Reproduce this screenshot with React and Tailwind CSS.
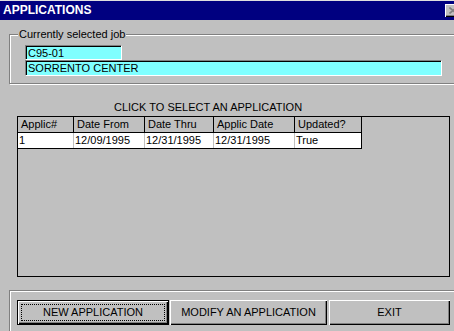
import React from 'react';

const columns = [
  { key: 'num', label: 'Applic#', width: 'w-[56px]' },
  { key: 'from', label: 'Date From', width: 'w-[71px]' },
  { key: 'thru', label: 'Date Thru', width: 'w-[69px]' },
  { key: 'applic', label: 'Applic Date', width: 'w-[81px]' },
  { key: 'updated', label: 'Updated?', width: 'w-[67px]' },
];

const rows = [
  { num: '1', from: '12/09/1995', thru: '12/31/1995', applic: '12/31/1995', updated: 'True' },
];

function Field({ value, className }) {
  return (
    <div className={`border-t border-l border-t-[#808080] border-l-[#808080] border-b border-r border-b-white border-r-white ${className}`}>
      <div className="h-full border-t border-l border-black bg-[#7fffff] pl-[1px] leading-[13px]">
        {value}
      </div>
    </div>
  );
}

function Button({ label, isDefault, className }) {
  if (isDefault) {
    return (
      <div className={`h-[25px] border border-black ${className}`}>
        <div className="h-full p-[3px] shadow-[inset_1px_1px_0_#fff,inset_-1px_-1px_0_#000,inset_-2px_-2px_0_#808080]">
          <div className="h-full border border-dotted border-black flex items-center justify-center">
            {label}
          </div>
        </div>
      </div>
    );
  }
  return (
    <div
      className={`h-[25px] flex items-center justify-center shadow-[inset_1px_1px_0_#fff,inset_-1px_-1px_0_#000,inset_-2px_-2px_0_#808080] ${className}`}
    >
      {label}
    </div>
  );
}

export default function App() {
  return (
    <div className="w-[454px] h-[331px] bg-[#c0c0c0] flex flex-col overflow-hidden font-['Liberation_Sans',Arial,sans-serif] text-[11px] text-black">
      {/* Title bar */}
      <div className="border-t border-[#dfdfdf] h-[20px] bg-[#000080] flex items-start justify-between pl-[3px] shrink-0">
        <span className="text-white font-bold text-[12px] leading-[18px]">APPLICATIONS</span>
        <div className="mt-[3px] -mr-[7px] w-[16px] h-[13px] bg-[#c0c0c0] shadow-[inset_1px_1px_0_#fff,inset_-1px_-1px_0_#000,inset_-2px_-2px_0_#808080] flex items-center justify-center">
          <svg width="8" height="7" viewBox="0 0 8 7">
            <path d="M0.5 0.5 L7.5 6.5 M7.5 0.5 L0.5 6.5" stroke="#808080" strokeWidth="1.6" />
          </svg>
        </div>
      </div>

      {/* Currently selected job */}
      <div className="relative ml-[9px] mt-[14px] w-[460px] h-[50px] shrink-0 border border-[#808080] shadow-[inset_1px_1px_0_#fff,1px_1px_0_#fff]">
        <span className="absolute left-[8px] -top-[7px] px-[1px] bg-[#c0c0c0] leading-[12px]">
          Currently selected job
        </span>
        <div className="pt-[10px] pl-[15px] flex flex-col">
          <Field value="C95-01" className="w-[97px] h-[15px]" />
          <Field value="SORRENTO CENTER" className="w-[417px] h-[16px]" />
        </div>
      </div>

      {/* Applications list */}
      <div className="mt-[17px] pl-[114px] leading-[12px] shrink-0">CLICK TO SELECT AN APPLICATION</div>
      <div className="mt-[3px] ml-[17px] w-[433px] h-[161px] border border-black shrink-0">
        <div className="flex w-[344px] bg-[#c0c0c0] border-b border-black">
          {columns.map((col) => (
            <div
              key={col.key}
              className={`${col.width} h-[15px] pl-[3px] leading-[14px] border-r border-black`}
            >
              {col.label}
            </div>
          ))}
        </div>
        {rows.map((row) => (
          <div key={row.num} className="flex w-[344px] bg-white border-b border-black">
            {columns.map((col, i) => (
              <div
                key={col.key}
                className={`${col.width} h-[15px] pl-[1px] leading-[14px] border-r ${
                  i === columns.length - 1 ? 'border-black' : 'border-[#c0c0c0]'
                }`}
              >
                {row[col.key]}
              </div>
            ))}
          </div>
        ))}
      </div>

      {/* Button panel */}
      <div className="mt-[13px] ml-[9px] flex-1 border-t border-l border-[#808080] shadow-[inset_1px_1px_0_#fff]">
        <div className="pt-[9px] pl-[7px] flex">
          <Button label="NEW APPLICATION" isDefault className="w-[152px]" />
          <Button label="MODIFY AN APPLICATION" className="w-[157px] ml-[1px]" />
          <Button label="EXIT" className="w-[121px] ml-[2px]" />
        </div>
      </div>
    </div>
  );
}
